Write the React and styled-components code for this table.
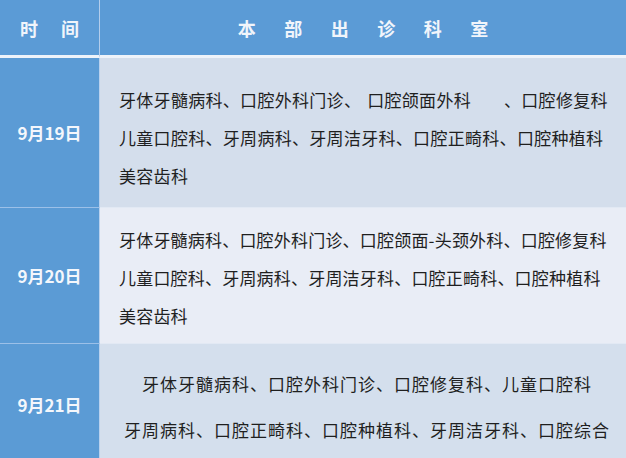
import React from "react";
import styled, { createGlobalStyle } from "styled-components";

const GlobalStyle = createGlobalStyle`
  html, body {
    margin: 0;
    padding: 0;
    background: #ffffff;
    overflow: hidden;
  }
  body {
    font-family: "Noto Sans CJK SC", "Noto Sans", sans-serif;
  }
`;

const StyledTable = styled.div`
  display: grid;
  grid-template-columns: 100px 1fr;
  width: 626px;
`;

const StyledHeadCell = styled.div`
  height: 55px;
  display: flex;
  align-items: center;
  justify-content: center;
  white-space: nowrap;
  background: #5b9bd6;
  color: #f1f5fb;
  font-size: 18px;
  font-weight: 700;
  letter-spacing: ${(p) => p.$spacing}px;
  padding-left: ${(p) => p.$spacing}px;
  border-bottom: 3px solid #eef3fa;
  border-right: ${(p) => (p.$first ? "1px solid #b3cdec" : "none")};
`;

const StyledDateCell = styled.div`
  display: flex;
  align-items: center;
  justify-content: center;
  background: #5b9bd5;
  color: #f4f7fc;
  font-size: 17px;
  font-weight: 700;
  border-right: 1px solid #b9d1ee;
  border-top: ${(p) => (p.$first ? "none" : "1px solid #9cc0e8")};
`;

const StyledDeptCell = styled.div`
  background: ${(p) => p.$bg};
  color: #1f1f1f;
  font-size: 17px;
  letter-spacing: ${(p) => p.$spacing}px;
  line-height: ${(p) => p.$lineHeight}px;
  padding: ${(p) => p.$padding};
  text-align: ${(p) => p.$align};
  white-space: nowrap;
  border-top: ${(p) => (p.$first ? "none" : "1px solid #e2e9f4")};
`;

const StyledLine = styled.div`
  display: block;
`;

const StyledGap = styled.span`
  display: inline-block;
  width: ${(p) => p.$w}px;
`;

const rows = [
  {
    date: "9月19日",
    bg: "#d4deec",
    padding: "23px 0 12px 19px",
    lineHeight: 38,
    spacing: 0.3,
    align: "left",
    lines: [
      <>
        牙体牙髓病科、口腔外科门诊、<StyledGap $w={6} />口腔颌面外科
        <StyledGap $w={33} />、口腔修复科
      </>,
      "儿童口腔科、牙周病科、牙周洁牙科、口腔正畸科、口腔种植科",
      "美容齿科",
    ],
  },
  {
    date: "9月20日",
    bg: "#e9edf6",
    padding: "13px 0 8px 19px",
    lineHeight: 38,
    spacing: 0.2,
    align: "left",
    lines: [
      "牙体牙髓病科、口腔外科门诊、口腔颌面-头颈外科、口腔修复科",
      "儿童口腔科、牙周病科、牙周洁牙科、口腔正畸科、口腔种植科",
      "美容齿科",
    ],
  },
  {
    date: "9月21日",
    bg: "#d4dfed",
    padding: "17px 0 11px 8px",
    lineHeight: 46,
    spacing: 1,
    align: "center",
    lines: [
      "牙体牙髓病科、口腔外科门诊、口腔修复科、儿童口腔科",
      "牙周病科、口腔正畸科、口腔种植科、牙周洁牙科、口腔综合",
    ],
  },
];

const App = () => {
  return (
    <>
      <GlobalStyle />
      <StyledTable>
        <StyledHeadCell $first $spacing={23}>
          时间
        </StyledHeadCell>
        <StyledHeadCell $spacing={28.5}>本部出诊科室</StyledHeadCell>
        {rows.map((row, i) => (
          <React.Fragment key={row.date}>
            <StyledDateCell $first={i === 0}>{row.date}</StyledDateCell>
            <StyledDeptCell
              $first={i === 0}
              $bg={row.bg}
              $padding={row.padding}
              $lineHeight={row.lineHeight}
              $spacing={row.spacing}
              $align={row.align}
            >
              {row.lines.map((line, j) => (
                <StyledLine key={j}>{line}</StyledLine>
              ))}
            </StyledDeptCell>
          </React.Fragment>
        ))}
      </StyledTable>
    </>
  );
};

export default App;
